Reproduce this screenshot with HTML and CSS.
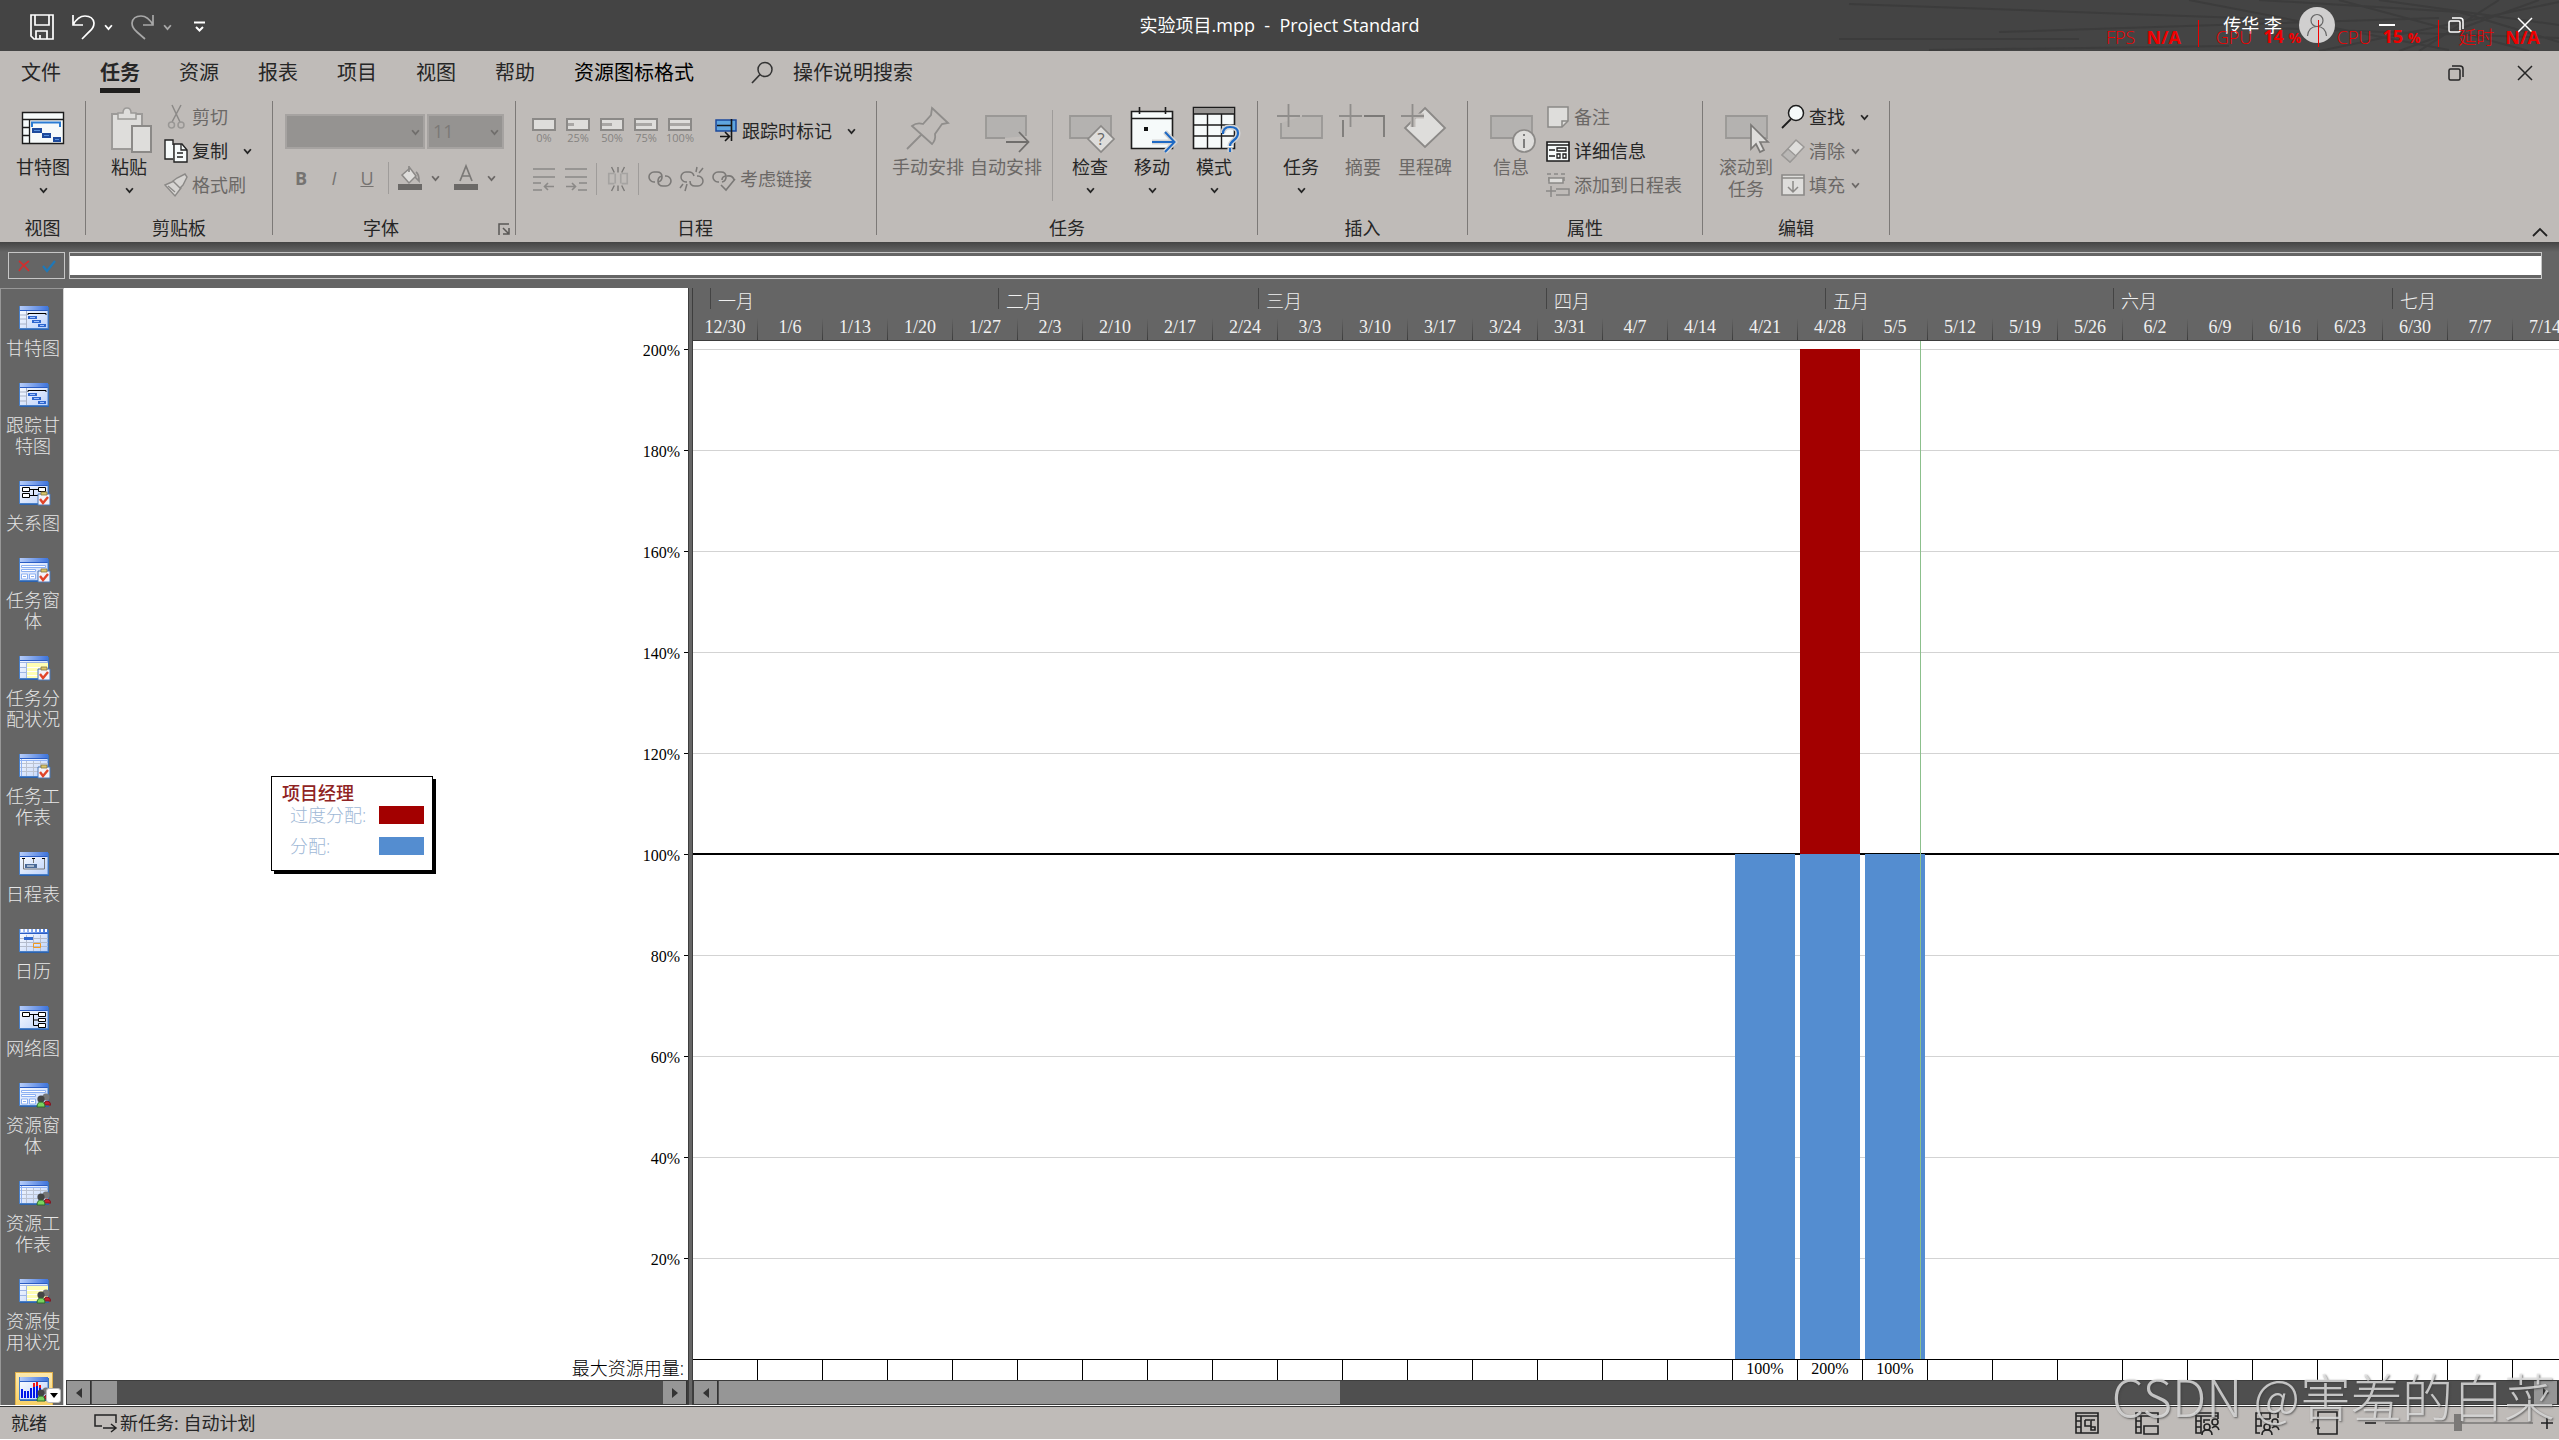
FILE: index.html
```html
<!DOCTYPE html>
<html lang="zh-CN">
<head>
  <meta charset="UTF-8">
  <meta name="viewport" content="width=device-width, initial-scale=1.0">
  <title>实验项目.mpp - Project Standard</title>
  <link rel="stylesheet" href="styles.css">
</head>
<body>

  <!-- Shared icon parts -->
  <svg class="sprite" aria-hidden="true">
    <defs>
      <linearGradient id="bar" x1="0" y1="0" x2="1" y2="0"><stop offset="0" stop-color="#b9cffa"/><stop offset="1" stop-color="#3f74dc"/></linearGradient>
      <linearGradient id="paper" x1="0" y1="0" x2="1" y2="1"><stop offset="0" stop-color="#fff"/><stop offset="1" stop-color="#bdd2fb"/></linearGradient>
    </defs>
    <symbol id="chev" viewBox="0 0 8 6"><path d="M1 1l3 3.500L7 1" fill="none" stroke="currentColor" stroke-width="1.600"/></symbol>
    <symbol id="win" viewBox="0 0 32 25">
      <path d="M1 1h29v23H1z" fill="#2c62ad"/><path d="M0 0h29v22H0z" fill="url(#paper)"/><path d="M0 0h29v4H0z" fill="url(#bar)"/><path d="M0 4.500h29" stroke="#2a5cc4"/><path d="M.5 0v22M0 22.500h29M29 1v22" stroke="#4a80c8" fill="none"/>
    </symbol>
    <symbol id="check" viewBox="0 0 32 25">
      <path d="M19 13h12v11H19z" fill="#f3f3fa" stroke="#4a78b8"/><path d="M22 11h6v3h-6z" fill="#d9c66a" stroke="#85743a" stroke-width=".8"/><path d="M21 18l3 4 5-6" fill="none" stroke="#e1452a" stroke-width="2.400"/>
    </symbol>
    <symbol id="people" viewBox="0 0 32 25">
      <circle cx="27" cy="14" r="3.600" fill="#777"/><circle cx="22" cy="16" r="3.600" fill="#454545"/><path d="M25 22q0-4 3-4t4 4z" fill="#c4202f" stroke="#7b1520"/><path d="M18 24q0-5 4-5t4 5z" fill="#7ad35f" stroke="#2c6a2a"/>
    </symbol>
    <symbol id="gantt" viewBox="0 0 32 25">
      <use href="#win"/><path d="M1 9h6M1 13h6M1 18h6M7.500 5v17" stroke="#a9b2c6"/><path d="M9 9V7.500h18V9" fill="none" stroke="#000"/><path d="M9 10h9v3H9zM13 14h9v3h-9zM19 18h8v3h-8z" fill="#2f67cf"/><path d="M11 11.500h5M15 15.500h5M21 19.500h4" stroke="#9fc1ff"/>
    </symbol>
    <symbol id="form" viewBox="0 0 32 25">
      <use href="#win"/><path d="M2.500 7.500h24v2h-24zM2.500 11.500h14v2h-14zM2.500 16h6v5h-6zM10.500 16h6v5h-6z" fill="#fff" stroke="#8cb0f2"/><path d="M4 18.500h3M12 18.500h3" stroke="#8cb0f2"/>
    </symbol>
    <symbol id="sheet" viewBox="0 0 32 25">
      <use href="#win"/><path d="M1 9.500h28M1 13.500h28M1 17.500h28M7.500 6v16M14.500 6v16M21.500 6v16" stroke="#bcc3d2"/><path d="M2.500 5v17M1 6.500h28" stroke="#8fb2f5"/>
    </symbol>
    <symbol id="usage" viewBox="0 0 32 25">
      <use href="#win"/><path d="M8 7h21v15H8z" fill="#ffffb4"/><path d="M1 6.500h28M1 11.500h6M1 16.500h6M7.500 6v16" stroke="#9fb6e4"/><path d="M8 11.500h21M8 15.500h21M8 19.500h21" stroke="#fff"/>
    </symbol>
    <symbol id="plus" viewBox="0 0 24 24"><path d="M0 12h23M11.500 0v23" stroke="#8f8d8b" stroke-width="1.800"/></symbol>
    <symbol id="restore" viewBox="0 0 16 16"><rect x="1" y="4" width="11" height="11" rx="1.500" fill="none" stroke="currentColor" stroke-width="1.500"/><path d="M4 1h8q3 0 3 3v8" fill="none" stroke="currentColor" stroke-width="1.500"/></symbol>
    <symbol id="close" viewBox="0 0 16 16"><path d="M1 1l14 14M15 1L1 15" stroke="currentColor" stroke-width="1.500"/></symbol>
  </svg>

  <header class="titlebar">
    <svg class="titlebar-art" viewBox="0 0 720 51" preserveAspectRatio="none"><path d="M10 4l420 15M0 39h240M90 50l300-4M160 32l440-14M350 0l260 50M420 0l200 12 100 30M480 51L720 2M500 0l190 51M560 51L700 0M430 28l290 10M540 0l180 25M580 51l80-51" fill="none" stroke="#3c3c3c" stroke-width="2"/></svg>
    <div class="quick">
      <button aria-label="保存"><svg width="24" height="26" viewBox="0 0 24 26"><path d="M1 1h22v24H4l-3-3zM5 1v10h14V1M6 25v-8h11v8M10 25v-4" fill="none" stroke="#fff" stroke-width="1.700"/></svg></button>
      <button class="undo" aria-label="撤消"><svg width="24" height="26" viewBox="0 0 24 26"><path d="M1 1v10h10M1 11Q6 2 13 2q8 0 9 7 0 5-5 9l-7 7" fill="none" stroke="#fff" stroke-width="1.700"/></svg><svg class="chev"><use href="#chev"/></svg></button>
      <button class="redo" aria-label="恢复"><svg width="24" height="26" viewBox="0 0 24 26"><path d="M22 1v10H12M22 11Q17 2 10 2 2 2 1 9q0 5 5 9l8 7" fill="none" stroke="#a8a8a8" stroke-width="1.700"/></svg><svg class="chev"><use href="#chev"/></svg></button>
      <button class="more" aria-label="自定义"><svg width="12" height="12" viewBox="0 0 12 12"><path d="M0 1.500h11M2 6l3.500 3.500L9 6" fill="none" stroke="#fff" stroke-width="2"/></svg></button>
    </div>
    <h1 class="doc-title">实验项目.mpp&nbsp; -&nbsp; Project Standard</h1>
    <div class="window-tools">
      <span class="user">传华 李</span>
      <svg class="avatar" viewBox="0 0 36 36"><circle cx="18" cy="18" r="18" fill="#d0cfcf"/><circle cx="18" cy="13.500" r="6" fill="none" stroke="#666" stroke-width="1.200"/><path d="M8.500 29q1-9.500 9.500-9.500t9.500 9.500" fill="none" stroke="#666" stroke-width="1.200"/></svg>
      <button aria-label="最小化"><svg width="16" height="16" viewBox="0 0 16 16"><path d="M0 8h16" stroke="#fff" stroke-width="2"/></svg></button>
      <button aria-label="还原"><svg width="16" height="16"><use href="#restore"/></svg></button>
      <button aria-label="关闭"><svg width="16" height="16"><use href="#close"/></svg></button>
    </div>
    <div class="perf">
      <span>FPS <b>N/A</b></span>
      <span>GPU <b>14 <small>%</small></b></span>
      <span>CPU <b>15 <small>%</small></b></span>
      <span>延时 <b>N/A</b></span>
    </div>
  </header>

  <section class="ribbon">
    <nav class="tabs">
      <a href="#">文件</a>
      <a href="#" class="active">任务</a>
      <a href="#">资源</a>
      <a href="#">报表</a>
      <a href="#">项目</a>
      <a href="#">视图</a>
      <a href="#">帮助</a>
      <a href="#" class="context">资源图标格式</a>
      <button class="tell-me"><svg width="22" height="24" viewBox="0 0 22 24"><circle cx="14" cy="8.500" r="7" fill="none" stroke="#333" stroke-width="1.500"/><path d="M9 13.500L1 22" stroke="#333" stroke-width="1.700"/></svg>操作说明搜索</button>
      <div class="doc-window">
        <button aria-label="还原窗口"><svg width="16" height="16"><use href="#restore"/></svg></button>
        <button aria-label="关闭窗口"><svg width="16" height="16"><use href="#close"/></svg></button>
      </div>
    </nav>

    <div class="groups">
      <div class="group g-view">
        <div class="tools">
          <button class="big">
            <svg class="pic" viewBox="0 0 46 46"><path d="M2.500 5.500h41v31h-41z" fill="#f6fafa" stroke="#1c1c1c" stroke-width="1.400"/><path d="M2 12.500h42M9.500 12v24M2 20.500h7M2 28.500h7" stroke="#1c1c1c" stroke-width="1.300"/><path d="M12 20v-4.500h28V20" fill="none" stroke="#2b7cd3" stroke-width="2"/><path d="M12 21h10v5H12zM22 26h9v5h-9zM33 30h8v5h-8z" fill="#1d4a9c"/><path d="M14 23.500h6M24 28.500h5M35 32.500h4" stroke="#5a93dd"/></svg>
            甘特图<svg class="chev"><use href="#chev"/></svg>
          </button>
        </div>
        <h2>视图</h2>
      </div>

      <div class="group g-clip">
        <div class="tools">
          <button class="big">
            <svg class="pic" viewBox="0 0 46 46"><path d="M6 7h30v35H6z" fill="#dedddb" stroke="#9c9a98" stroke-width="2"/><path d="M12 12V6h5q0-5 4-5t4 5h5v6z" fill="#dedddb" stroke="#9c9a98" stroke-width="1.500"/><path d="M26 19h19v26H26z" fill="#dedddb" stroke="#8b8987" stroke-width="2"/></svg>
            粘贴<svg class="chev"><use href="#chev"/></svg>
          </button>
          <div class="stack">
            <button disabled><svg class="ico" viewBox="0 0 24 24"><path d="M8 0l8 17M17 0L8 17" stroke="#8b8987" stroke-width="1.500"/><circle cx="7.500" cy="20" r="3" fill="none" stroke="#999795" stroke-width="1.500"/><circle cx="17" cy="20" r="3" fill="none" stroke="#999795" stroke-width="1.500"/></svg>剪切</button>
            <button><svg class="ico" viewBox="0 0 24 24"><path d="M9 20H1V1h8v5" fill="#f6fafa" stroke="#222" stroke-width="1.400"/><path d="M10 5h8l5 6v12H10z" fill="#f6fafa" stroke="#222" stroke-width="1.400"/><path d="M17 5v6h6M13 14h6M13 18h6" fill="none" stroke="#222" stroke-width="1.300"/></svg>复制 <svg class="chev"><use href="#chev"/></svg></button>
            <button disabled><svg class="ico" viewBox="0 0 24 24"><path d="M1 12l9-4 7 7-6 8z" fill="#d6d4d2" stroke="#8b8987" stroke-width="1.400"/><path d="M9 8l4-3 8-4 2 3-4 8-3 3zM4 13l7 6" fill="#d6d4d2" stroke="#8b8987" stroke-width="1.400"/></svg>格式刷</button>
          </div>
        </div>
        <h2>剪贴板</h2>
      </div>

      <div class="group g-font">
        <div class="tools rows">
          <div class="row selects">
            <label class="pick pick-font"><select aria-label="字体" disabled><option></option></select><svg class="chev"><use href="#chev"/></svg></label>
            <label class="pick pick-size"><select aria-label="字号" disabled><option>11</option></select><svg class="chev"><use href="#chev"/></svg></label>
          </div>
          <div class="row">
            <button class="tool" disabled><b>B</b></button>
            <button class="tool" disabled><i>I</i></button>
            <button class="tool" disabled><u>U</u></button>
            <span class="rule"></span>
            <button class="tool" disabled aria-label="填充颜色"><svg class="ico" viewBox="0 0 24 24"><path d="M4 9l8-7 6 8-7 7z" fill="#dedddb" stroke="#8b8987" stroke-width="1.500"/><path d="M11 0v6M18 6q3 2 3 9l-4-4" fill="none" stroke="#8b8987" stroke-width="1.700"/><path d="M0 18h24v6H0z" fill="#6b6967"/></svg></button>
            <svg class="chev dim"><use href="#chev"/></svg>
            <button class="tool" disabled aria-label="字体颜色"><svg class="ico" viewBox="0 0 24 24"><path d="M6 15L12 0l6 15M8 10h8" fill="none" stroke="#7b7977" stroke-width="1.700"/><path d="M0 18h24v6H0z" fill="#6b6967"/></svg></button>
            <svg class="chev dim"><use href="#chev"/></svg>
          </div>
        </div>
        <h2>字体</h2>
        <button class="launcher" aria-label="字体设置"><svg width="12" height="12" viewBox="0 0 12 12"><path d="M1 12V1h10M5 5l6 6M11 5v6H5" fill="none" stroke="#5a5856" stroke-width="1.500"/></svg></button>
      </div>

      <div class="group g-plan">
        <div class="tools rows">
          <div class="row">
            <button class="pct" disabled><svg viewBox="0 0 24 13"><path d="M1 1h22v11H1z"/></svg>0%</button>
            <button class="pct" disabled><svg viewBox="0 0 24 13"><path d="M1 1h22v11H1z"/><path d="M2 6.500h6" class="fill"/></svg>25%</button>
            <button class="pct" disabled><svg viewBox="0 0 24 13"><path d="M1 1h22v11H1z"/><path d="M2 6.500h10" class="fill"/></svg>50%</button>
            <button class="pct" disabled><svg viewBox="0 0 24 13"><path d="M1 1h22v11H1z"/><path d="M2 6.500h16" class="fill"/></svg>75%</button>
            <button class="pct" disabled><svg viewBox="0 0 24 13"><path d="M1 1h22v11H1z"/><path d="M2 6.500h20" class="fill"/></svg>100%</button>
            <button class="line track"><svg class="ico" viewBox="0 0 24 24"><path d="M2 1h20v11H2z" fill="#5fa5de" stroke="#1d4a9c" stroke-width="1.500"/><path d="M3 6.500h14M17.500 0v22M6 17.500h9M11 13l4.500 4.500L11 22" fill="none" stroke="#151515" stroke-width="1.600"/></svg>跟踪时标记 <svg class="chev"><use href="#chev"/></svg></button>
          </div>
          <div class="row">
            <button class="tool" disabled aria-label="升级"><svg class="ico" viewBox="0 0 24 24"><path d="M1 2h22M1 10h22M1 16h8M1 23h9M13 19.500h9M16 16l-3.500 3.500L16 23" fill="none" stroke="#8b8987" stroke-width="1.600"/></svg></button>
            <button class="tool" disabled aria-label="降级"><svg class="ico" viewBox="0 0 24 24"><path d="M1 2h22M1 10h22M15 16h8M14 23h9M2 19.500h9M8 16l3.500 3.500L8 23" fill="none" stroke="#8b8987" stroke-width="1.600"/></svg></button>
            <span class="rule"></span>
            <button class="tool" disabled aria-label="拆分"><svg class="ico" viewBox="0 0 24 26"><path d="M8 7H2v11h6M16 7h6v11h-6M9 7v11M15 7v11" fill="none" stroke="#a5a3a1" stroke-width="1.800"/><path d="M12 0v6M5 0l3 6M19 0l-3 6M12 20v6M5 26l3-6M19 26l-3-6" stroke="#7b7977" stroke-width="1.500"/></svg></button>
            <span class="rule"></span>
            <button class="tool" disabled aria-label="链接"><svg class="ico" viewBox="0 0 24 24"><path d="M7 15H6a5 5 0 010-10h3q5 0 5 5 0 4-4 5M17 9h1a5 5 0 010 10h-3q-5 0-5-5 0-4 4-5" fill="none" stroke="#7b7977" stroke-width="1.600"/></svg></button>
            <button class="tool" disabled aria-label="取消链接"><svg class="ico" viewBox="0 0 24 24"><path d="M7 15H6a5 5 0 010-10h3q4 0 5 4M17 9h1a5 5 0 010 10h-3q-5 0-5-5M16 5l1-5M19 6l4-5M7 17l-2 7M3 17l-3 4" fill="none" stroke="#7b7977" stroke-width="1.500"/></svg></button>
            <button class="line" disabled><svg class="ico" viewBox="0 0 24 24"><path d="M7 15H6a5 5 0 010-10h3q5 0 5 5 0 4-4 5M10 13q0-4 5-4 6-1 7 4M9 18l5 5 9-11" fill="none" stroke="#7b7977" stroke-width="1.600"/></svg>考虑链接</button>
          </div>
        </div>
        <h2>日程</h2>
      </div>

      <div class="group g-task">
        <div class="tools">
          <button class="big wide" disabled><svg class="pic" viewBox="0 0 46 46"><path d="M27 1l16 15-6 1-7 10q1 6-3 10L7 19q5-4 11-2l8-9zM16 28L2 42" fill="none" stroke="#8f8d8b" stroke-width="1.800"/></svg>手动安排</button>
          <button class="big wide" disabled><svg class="pic" viewBox="0 0 46 46"><path d="M22 31H3V9h40v20" fill="#b4b2b0" stroke="#9a9896" stroke-width="1.800"/><path d="M23 35h22M36 25l9.500 10L36 45" fill="none" stroke="#706e6c" stroke-width="1.800"/></svg>自动安排</button>
          <span class="rule tall"></span>
          <button class="big"><svg class="pic" viewBox="0 0 46 46"><path d="M3 9h41v22H3z" fill="#b4b2b0" stroke="#9a9896" stroke-width="1.800"/><path d="M34 19l13 13-13 13-13-13z" fill="#dedddb" stroke="#8b8987" stroke-width="1.700"/><text x="34" y="38" class="mark" fill="#666">?</text></svg>检查<svg class="chev"><use href="#chev"/></svg></button>
          <button class="big"><svg class="pic" viewBox="0 0 46 46"><path d="M2.500 4.500h41v37h-41z" fill="#f6fafa" stroke="#1c1c1c" stroke-width="1.600"/><path d="M2 11.500h42M10.500 0v7M36.500 0v7" stroke="#1c1c1c" stroke-width="1.600"/><path d="M15 20h4v4h-4z" fill="#111"/><path d="M23 35h22M36 25l9.500 10L36 45" fill="none" stroke="#d5d5d5" stroke-width="5"/><path d="M23 35h22M36 25l9.500 10L36 45" fill="none" stroke="#1f6ac4" stroke-width="2"/></svg>移动<svg class="chev"><use href="#chev"/></svg></button>
          <button class="big"><svg class="pic" viewBox="0 0 46 46"><path d="M2.500.5h41v41h-41z" fill="#f6fafa" stroke="#1c1c1c" stroke-width="1.600"/><path d="M3 1h40v6H3z" fill="#979593"/><path d="M2 7h42M2 18h42M2 29h42M16.500 7v34M30.500 7v34" stroke="#1c1c1c" stroke-width="1.400"/><path d="M32 26q0-6 7-6 8 0 8 6 0 4-4 7-4 3-4 6M39 41v4" fill="none" stroke="#d5d5d5" stroke-width="5"/><path d="M32 27q0-7 7-7 8 0 8 6 0 4-4 7-4 3-4 6M39 41v4" fill="none" stroke="#1f6ac4" stroke-width="2.200"/></svg>模式<svg class="chev"><use href="#chev"/></svg></button>
        </div>
        <h2>任务</h2>
      </div>

      <div class="group g-insert">
        <div class="tools">
          <button class="big"><svg class="pic" viewBox="0 0 46 46"><path d="M24 9h20v22H3V16" fill="#b9b6b3" stroke="#9a9896" stroke-width="1.800"/><use href="#plus" x="-1" y="-3" width="24" height="24"/></svg>任务<svg class="chev"><use href="#chev"/></svg></button>
          <button class="big" disabled><svg class="pic" viewBox="0 0 46 46"><path d="M24 9h20v21M3 13v17" fill="none" stroke="#7b7977" stroke-width="1.800"/><use href="#plus" x="-1" y="-3" width="24" height="24"/></svg>摘要</button>
          <button class="big" disabled><svg class="pic" viewBox="0 0 46 46"><path d="M23 1l20 20-20 19L3 21z" fill="#dedddb" stroke="#8b8987" stroke-width="1.800"/><path d="M0 9h22M11 -2v22" stroke="#bfbbb8" stroke-width="5"/><use href="#plus" x="-1" y="-3" width="24" height="24"/></svg>里程碑</button>
        </div>
        <h2>插入</h2>
      </div>

      <div class="group g-props">
        <div class="tools">
          <button class="big" disabled><svg class="pic" viewBox="0 0 46 46"><path d="M3 9h41v22H3z" fill="#b4b2b0" stroke="#9a9896" stroke-width="1.800"/><circle cx="36" cy="34" r="11" fill="#dedddb" stroke="#8b8987" stroke-width="1.700"/><path d="M36 32v9M36 27v2" stroke="#666" stroke-width="1.600"/></svg>信息</button>
          <div class="stack">
            <button disabled><svg class="ico" viewBox="0 0 24 24"><path d="M2 2h20v14l-6 6H2z" fill="#dedddb" stroke="#8b8987" stroke-width="1.500"/><path d="M22 16h-6v6" fill="none" stroke="#8b8987" stroke-width="1.500"/></svg>备注</button>
            <button><svg class="ico" viewBox="0 0 24 24"><path d="M1 3h22v19H1z" fill="#f6fafa" stroke="#1c1c1c" stroke-width="1.600"/><path d="M1 6h22M3 11h6M3 17h6M11 9h9v3h-9zM11 15h3v4h-3zM17 15h3v4h-3z" fill="none" stroke="#1c1c1c" stroke-width="1.300"/></svg>详细信息</button>
            <button disabled><svg class="ico" viewBox="0 0 24 24"><path d="M1 1h4M8 1h4M15 1h4M0 18h10M5 13v11M10 16h13v6H10M3 4v4M18 4v4" fill="none" stroke="#8b8987" stroke-width="1.500"/><path d="M3 5h14v5H3z" fill="#dedddb" stroke="#8b8987" stroke-width="1.500"/></svg>添加到日程表</button>
          </div>
        </div>
        <h2>属性</h2>
      </div>

      <div class="group g-edit">
        <div class="tools">
          <button class="big" disabled><svg class="pic" viewBox="0 0 46 46"><path d="M3 9h41v22H3z" fill="#b4b2b0" stroke="#9a9896" stroke-width="1.800"/><path d="M28 18v24l5-5 4 8 4-2-4-8h8z" fill="#dedddb" stroke="#7b7977" stroke-width="1.700"/></svg>滚动到<br>任务</button>
          <div class="stack">
            <button><svg class="ico" viewBox="0 0 24 24"><circle cx="15" cy="8" r="7.500" fill="#f6fafa" stroke="#1c1c1c" stroke-width="1.500"/><path d="M10 14l-9 9" stroke="#1c1c1c" stroke-width="1.800"/></svg>查找 <svg class="chev"><use href="#chev"/></svg></button>
            <button disabled><svg class="ico" viewBox="0 0 24 24"><path d="M1 16L15 1l8 7L9 23z" fill="#dedddb" stroke="#9a9896" stroke-width="1.500"/><path d="M1 16l6-6 8 7-6 6z" fill="#b9b7b5" stroke="#9a9896" stroke-width="1.300"/></svg>清除<svg class="chev"><use href="#chev"/></svg></button>
            <button disabled><svg class="ico" viewBox="0 0 24 24"><path d="M1 2h22v20H1z" fill="#dedddb" stroke="#8b8987" stroke-width="1.600"/><path d="M1 5h22M12 8v11M7 14l5 5 5-5" fill="none" stroke="#8b8987" stroke-width="1.500"/></svg>填充<svg class="chev"><use href="#chev"/></svg></button>
          </div>
        </div>
        <h2>编辑</h2>
      </div>

      <button class="collapse" aria-label="折叠功能区"><svg width="16" height="10" viewBox="0 0 16 10"><path d="M1 9l7-7 7 7" fill="none" stroke="#222" stroke-width="1.800"/></svg></button>
    </div>
  </section>

  <div class="entry">
    <div class="entry-actions">
      <button aria-label="取消"><svg width="12" height="12" viewBox="0 0 12 12"><path d="M1 1q5 4 10 10M11 1Q4 6 1 11" fill="none" stroke="#cf2f2f" stroke-width="1.700"/></svg></button>
      <button aria-label="输入"><svg width="14" height="12" viewBox="0 0 14 12"><path d="M1 6l4 5 8-10" fill="none" stroke="#1f78b8" stroke-width="2.200"/></svg></button>
    </div>
    <input type="text" class="entry-text" aria-label="条目">
  </div>

  <main class="workspace">
    <nav class="views">
      <a href="#"><svg><use href="#gantt"/></svg>甘特图</a>
      <a href="#"><svg><use href="#gantt"/></svg>跟踪甘特图</a>
      <a href="#"><svg viewBox="0 0 32 25"><use href="#win"/><path d="M3.500 6.500h7v4h-7zM3.500 12.500h7v4h-7zM19.500 6.500h7v4h-7zM11 8.500h8M11 14.500h9M14.500 9v6" fill="#fff" stroke="#000"/><use href="#check"/></svg>关系图</a>
      <a href="#"><svg viewBox="0 0 32 25"><use href="#form"/><use href="#check"/></svg>任务窗体</a>
      <a href="#"><svg viewBox="0 0 32 25"><use href="#usage"/><use href="#check"/></svg>任务分配状况</a>
      <a href="#"><svg viewBox="0 0 32 25"><use href="#sheet"/><use href="#check"/></svg>任务工作表</a>
      <a href="#"><svg viewBox="0 0 32 25"><use href="#win"/><path d="M4.500 7v10h21V7M14.500 7v4" fill="none" stroke="#777"/><path d="M3 6.500h3M13 6.500h3M23 6.500h3" stroke="#000"/><path d="M6 12h12v4H6z" fill="#4b6a98"/><path d="M8 14h7" stroke="#fff"/></svg>日程表</a>
      <a href="#"><svg viewBox="0 0 32 25"><use href="#win"/><path d="M1 9.500h28M1 13.500h28M1 17.500h28M7.500 6v16M14.500 6v16M21.500 6v16" stroke="#b4bccd"/><path d="M2 1.500h26" stroke="#fff" stroke-width="3" stroke-dasharray="2 2"/><path d="M5 8h9v3H5z" fill="#2f67cf"/><path d="M14.500 14.500h7v4h-7z" fill="none" stroke="#f39a1f"/></svg>日历</a>
      <a href="#"><svg viewBox="0 0 32 25"><use href="#win"/><path d="M3.500 6.500h7v4h-7zM19.500 6.500h7v4h-7zM19.500 12.500h7v3h-7zM19.500 17.500h7v4h-7z" fill="#fff" stroke="#000"/><path d="M11 8.500h8M14.500 9v10.500H19M15 14h4" fill="none" stroke="#000"/></svg>网络图</a>
      <a href="#"><svg viewBox="0 0 32 25"><use href="#form"/><use href="#people"/></svg>资源窗体</a>
      <a href="#"><svg viewBox="0 0 32 25"><use href="#sheet"/><use href="#people"/></svg>资源工作表</a>
      <a href="#"><svg viewBox="0 0 32 25"><use href="#usage"/><use href="#people"/></svg>资源使用状况</a>
      <a href="#" class="current" aria-label="资源图表"><svg viewBox="0 0 32 25"><use href="#win"/><path d="M3 12v9M6 14v7M9 14v7M12 11v10M15 9v12M18 9v12M21 11v10" stroke="#0018e8" stroke-width="2"/><path d="M15 6v4M18 5v4M21 8v3" stroke="#f01414" stroke-width="2"/><use href="#people"/></svg></a>
      <button class="views-more" aria-label="更多视图"><svg width="8" height="5" viewBox="0 0 8 5"><path d="M0 0h8L4 5z"/></svg></button>
    </nav>

    <section class="legend-pane">
      <div class="legend-body">
        <div class="legend-wrap">
          <dl class="legend">
            <dt>项目经理</dt>
            <dd>过度分配:<i class="over"></i></dd>
            <dd>分配:<i class="alloc"></i></dd>
          </dl>
        </div>
        <ol class="axis">
          <li>200%</li><li>180%</li><li>160%</li><li>140%</li><li>120%</li>
          <li>100%</li><li>80%</li><li>60%</li><li>40%</li><li>20%</li>
        </ol>
      </div>
      <p class="axis-total">最大资源用量:</p>
      <div class="scroll">
        <button aria-label="向左"><svg class="arrow" viewBox="0 0 6 10"><path d="M6 0v10L0 5z"/></svg></button>
        <span class="thumb thumb-small"></span>
        <button class="end" aria-label="向右"><svg class="arrow" viewBox="0 0 6 10"><path d="M0 0v10l6-5z"/></svg></button>
      </div>
    </section>

    <div class="splitter"></div>

    <section class="chart">
      <div class="timescale">
        <div class="months">
          <span style="width:18px"></span>
          <span style="width:288px">一月</span>
          <span style="width:260px">二月</span>
          <span style="width:288px">三月</span>
          <span style="width:279px">四月</span>
          <span style="width:288px">五月</span>
          <span style="width:279px">六月</span>
          <span style="width:288px">七月</span>
        </div>
        <div class="weeks">
          <span>12/30</span><span>1/6</span><span>1/13</span><span>1/20</span><span>1/27</span>
          <span>2/3</span><span>2/10</span><span>2/17</span><span>2/24</span><span>3/3</span>
          <span>3/10</span><span>3/17</span><span>3/24</span><span>3/31</span><span>4/7</span>
          <span>4/14</span><span>4/21</span><span>4/28</span><span>5/5</span><span>5/12</span>
          <span>5/19</span><span>5/26</span><span>6/2</span><span>6/9</span><span>6/16</span>
          <span>6/23</span><span>6/30</span><span>7/7</span><span>7/14</span>
        </div>
      </div>
      <div class="plot">
        <div class="grid-line"></div><div class="grid-line"></div><div class="grid-line"></div><div class="grid-line"></div><div class="grid-line"></div>
        <div class="grid-line limit"></div><div class="grid-line"></div><div class="grid-line"></div><div class="grid-line"></div><div class="grid-line"></div>
        <div class="bars">
          <div class="bar"><i class="alloc" style="height:50%"></i></div>
          <div class="bar"><i class="over" style="height:50%"></i><i class="alloc" style="height:50%"></i></div>
          <div class="bar"><i class="alloc" style="height:50%"></i></div>
        </div>
        <div class="today"></div>
      </div>
      <div class="totals">
        <span></span><span></span><span></span><span></span><span></span><span></span><span></span><span></span>
        <span></span><span></span><span></span><span></span><span></span><span></span><span></span><span></span>
        <span>100%</span><span>200%</span><span>100%</span>
        <span></span><span></span><span></span><span></span><span></span><span></span><span></span><span></span><span></span><span></span>
      </div>
      <div class="scroll">
        <button aria-label="向左"><svg class="arrow" viewBox="0 0 6 10"><path d="M6 0v10L0 5z"/></svg></button>
        <span class="thumb thumb-large"></span>
        <button class="end" aria-label="向右"><svg class="arrow" viewBox="0 0 6 10"><path d="M0 0v10l6-5z"/></svg></button>
      </div>
    </section>
  </main>

  <footer class="status">
    <span class="ready">就绪</span>
    <button class="new-task"><svg width="24" height="18" viewBox="0 0 24 18"><path d="M8 12H1V1h21v8M9 14h13M17 10l5 4-5 4" fill="none" stroke="#222" stroke-width="1.500"/></svg>新任务: 自动计划</button>
    <div class="status-views">
      <button aria-label="甘特图"><svg viewBox="0 0 24 24"><path d="M1 2h22v20H1zM1 5h22M6 5v17M1 10h5M1 16h5M10 9v6h6V9h4M10 9h5M16 16h4v3h-4z"/></svg></button>
      <button aria-label="任务分配状况"><svg viewBox="0 0 24 24"><path d="M23 12V2H1v20h5V5M1 5h22M1 10h5M1 16h5M9 15h14v8H9z"/></svg></button>
      <button aria-label="工作组规划器"><svg viewBox="0 0 24 24"><path d="M23 8V2H1v20h5V5M1 5h22M1 10h5M1 16h5M9 12V9h6"/><circle cx="12" cy="16" r="3"/><circle cx="20" cy="11" r="3"/><path d="M7 24q0-5 5-5t5 5M17 17q5-4 7 2"/></svg></button>
      <button aria-label="资源工作表"><svg viewBox="0 0 24 24"><path d="M5 22H1V2h22v5M1 8h14M1 15h6M6 2v13M15 2v6"/><circle cx="12" cy="16" r="3"/><circle cx="20" cy="11" r="3"/><path d="M7 24q0-5 5-5t5 5M17 17q5-4 7 2"/></svg></button>
      <button aria-label="报表"><svg viewBox="0 0 24 24"><path d="M3 1h19v22H3zM1 7h4M1 17h4"/></svg></button>
    </div>
    <div class="zoom">
      <button aria-label="缩小"><svg viewBox="0 0 12 12"><path d="M0 6h11"/></svg></button>
      <input type="range" min="0" max="100" value="49" aria-label="显示比例">
      <button aria-label="放大"><svg viewBox="0 0 12 12"><path d="M0 6h12M6 0v12"/></svg></button>
    </div>
  </footer>

  <div class="watermark">CSDN @害羞的白菜</div>

</body>
</html>
```

FILE: styles.css
```css
* {
  box-sizing: border-box;
}

body {
  margin: 0;
  height: 100vh;
  display: flex;
  flex-direction: column;
  position: relative;
  overflow: hidden;
  background-color: #656565;
  color: #262626;
  font-family: "Open Sans", "Noto Sans CJK SC", sans-serif;
  font-size: 18px;
  line-height: 22px;
}

button {
  margin: 0;
  padding: 0;
  border: 0;
  background: none;
  color: inherit;
  font: inherit;
  white-space: nowrap;
}

a {
  color: inherit;
  text-decoration: none;
}

button:disabled {
  color: #6b6866;
}

h1, h2, p, ol, dl, dd {
  margin: 0;
  padding: 0;
  font-size: 18px;
  font-weight: normal;
  list-style: none;
}

svg {
  display: block;
  flex: none;
  overflow: visible;
}

.sprite {
  position: absolute;
  width: 0;
  height: 0;
}

.chev {
  width: 9px;
  height: 7px;
}

/* Title bar */
.titlebar {
  position: relative;
  flex: none;
  display: grid;
  grid-template-columns: 1fr auto 1fr;
  align-items: center;
  height: 51px;
  padding-bottom: 2px;
  background-color: #444;
  color: #fff;
}

.titlebar-art {
  position: absolute;
  top: 0;
  right: 0;
  width: 720px;
  height: 51px;
  overflow: hidden;
}

.quick {
  display: flex;
  align-items: center;
  gap: 18px;
  padding: 5px 0 0 30px;
}

.quick button {
  display: flex;
  align-items: center;
  gap: 8px;
}

.quick .redo {
  color: #a8a8a8;
}

.quick .more {
  margin-left: 4px;
}

.window-tools {
  position: relative;
  display: flex;
  justify-content: flex-end;
  align-items: center;
}

.window-tools .avatar {
  width: 36px;
  height: 36px;
  margin: 0 17px 0 17px;
}

.window-tools button,
.doc-window button {
  display: grid;
  place-items: center;
  width: 69px;
  height: 40px;
}

.perf {
  position: absolute;
  top: 20px;
  right: 0;
  display: grid;
  grid-template-columns: repeat(4, 120px);
  color: #f00000;
  font-family: "Open Sans", "Noto Sans CJK SC", sans-serif;
  font-weight: 300;
}

.perf span {
  display: flex;
  justify-content: center;
  align-items: center;
  gap: 11px;
  height: 27px;
  padding-top: 6px;
  border-right: 1px solid #f00000;
}

.perf span:last-child {
  border: 0;
}

.perf span:first-child {
  padding-left: 10px;
}

.perf b {
  font-weight: 700;
}

.perf small {
  font-size: 14px;
}

/* Ribbon */
.ribbon {
  flex: none;
  height: 191px;
  background-color: #bfbbb8;
}

.tabs {
  display: flex;
  gap: 39px;
  height: 50px;
  padding-left: 21px;
  font-size: 20px;
  line-height: 44px;
}

.tabs a {
  height: 42px;
}

.tabs .active {
  font-weight: bold;
  border-bottom: 5px solid #1f1e1d;
}

.tabs .context {
  color: #000;
}

.tell-me {
  display: flex;
  align-items: center;
  gap: 20px;
  height: 44px;
  margin-left: 18px;
}

.doc-window {
  display: flex;
  align-items: center;
  height: 44px;
  margin-left: auto;
}

.groups {
  position: relative;
  display: flex;
}

.group {
  position: relative;
  display: flex;
  flex-direction: column;
  justify-content: space-between;
  height: 134px;
  padding-left: 12px;
  border-right: 1px solid #7c7977;
}

.g-view { width: 86px; }
.g-clip { width: 187px; }
.g-font { width: 243px; }
.g-plan { width: 361px; }
.g-task { width: 381px; }
.g-insert { width: 210px; }
.g-props { width: 235px; }
.g-edit { width: 187px; }

.group h2 {
  line-height: 14px;
  text-align: center;
  margin-left: -12px;
}

.g-font h2 {
  padding-right: 26px;
}

.tools {
  display: flex;
}

.big {
  display: flex;
  flex-direction: column;
  align-items: center;
  width: 62px;
  padding-top: 6px;
}

.big.wide {
  width: 78px;
}

.pic {
  width: 46px;
  height: 46px;
  margin-bottom: 3px;
}

.mark {
  font-size: 17px;
  text-anchor: middle;
}

.big .chev {
  margin-top: 9px;
}

.stack {
  display: flex;
  flex-direction: column;
  margin: -1px 0 0 4px;
}

.stack button,
.line {
  display: flex;
  align-items: center;
  gap: 4px;
  height: 34px;
}

.stack .chev,
.line .chev {
  margin-left: 11px;
}

.stack button:disabled .chev {
  margin-left: 2px;
}

.ico {
  width: 24px;
  height: 24px;
}

.rows {
  flex-direction: column;
  gap: 13px;
  padding-top: 13px;
}

.row {
  display: flex;
  align-items: center;
  gap: 9px;
  height: 34px;
}

.g-plan {
  padding-left: 16px;
}

.g-plan .row {
  gap: 8px;
}

.g-plan .rows {
  gap: 14px;
}

.g-plan .rule {
  margin-right: 1px;
}

.g-plan h2 {
  margin-left: -18px;
}

.g-font .row {
  padding-left: 4px;
}

.g-font .selects {
  gap: 2px;
  padding-left: 0;
}

.dim {
  color: #6b6866;
  margin-right: 5px;
}

.tool {
  display: grid;
  place-items: center;
  width: 24px;
  height: 34px;
}

.tool:disabled {
  color: #757371;
}

.rule {
  width: 1px;
  height: 32px;
  background-color: #9f9c9a;
}

.rule.tall {
  height: 91px;
  margin: 9px 6px 0 7px;
}

.pick {
  position: relative;
  height: 35px;
}

.pick select {
  width: 100%;
  height: 100%;
  padding: 0 4px;
  border: 2px solid #a6a3a1;
  border-radius: 0;
  background-color: #959391;
  color: #7b7977;
  font: inherit;
  opacity: 1;
  appearance: none;
}

.pick .chev {
  position: absolute;
  top: 15px;
  right: 5px;
  color: #706e6c;
}

.pick-font { width: 140px; }
.pick-size { width: 77px; }

.launcher {
  position: absolute;
  right: 5px;
  bottom: 0;
}

.pct {
  display: flex;
  flex-direction: column;
  align-items: center;
  width: 24px;
  margin-right: 2px;
  font-size: 11px;
  line-height: 14px;
}

.pct:disabled {
  color: #858381;
}

.pct svg {
  width: 24px;
  height: 13px;
  fill: #dedddb;
  stroke: #8b8987;
  stroke-width: 2;
}

.pct .fill {
  stroke: #a9a7a5;
  stroke-width: 3;
}

.track {
  margin-left: 12px;
}

.collapse {
  position: absolute;
  right: 11px;
  bottom: -2px;
}

/* Entry bar */
.entry {
  flex: none;
  display: flex;
  gap: 4px;
  height: 46px;
  padding: 10px 17px 9px 8px;
  background: linear-gradient(#444, #656565 10px);
}

.entry-actions {
  display: flex;
  align-items: center;
  justify-content: center;
  gap: 12px;
  width: 57px;
  border: 1px solid #c6c6c6;
}

.entry-text {
  flex: 1;
  min-width: 0;
  padding: 3px 0;
  border: 1px solid #c6c6c6;
  background: #fff content-box;
  font: inherit;
}

/* Workspace */
.workspace {
  flex: 1;
  min-height: 0;
  display: grid;
  grid-template-columns: 64px 624px 5px minmax(0, 1fr);
  border-bottom: 1px solid #fff;
}

.views {
  position: relative;
  min-height: 0;
  overflow: hidden;
  padding-top: 17px;
  border-left: 1px solid #979797;
  border-top: 1px solid #979797;
  border-right: 1px solid #d4d4d4;
  color: #e6e6e6;
  font-weight: 300;
  line-height: 21px;
  text-align: center;
}

.views a {
  display: block;
  width: 54px;
  margin: 0 auto 24px 5px;
}

.views a svg {
  width: 32px;
  height: 25px;
  margin: 0 auto 7px 13px;
}

.views .current {
  width: 38px;
  height: 36px;
  margin: -5px 0 0 14px;
  padding: 4px 0 0 3px;
  border: 1px solid #e0b04a;
  background: linear-gradient(#fde9ae, #f8cf62);
}

.views .current svg {
  margin: 0;
}

.views-more {
  position: absolute;
  right: 2px;
  bottom: 2px;
  display: grid;
  place-items: center;
  width: 15px;
  height: 15px;
  border: 1px solid #bbb;
  border-radius: 3px;
  background-color: #fff;
}

.legend-pane {
  display: flex;
  flex-direction: column;
  min-height: 0;
  background-color: #fff;
}

.legend-pane .scroll {
  margin-left: 2px;
}

.legend-body {
  flex: 1;
  display: flex;
}

.legend-wrap {
  flex: 1;
  display: grid;
  place-items: center;
}

.legend {
  width: 162px;
  height: 95px;
  padding: 6px 8px 0 10px;
  border: 1px solid #000;
  background-color: #fff;
  box-shadow: 3px 3px 0 #000;
}

.legend dt {
  color: #8f2323;
  font-weight: 500;
  line-height: 21px;
}

.legend dd {
  display: flex;
  justify-content: space-between;
  align-items: center;
  padding-left: 8px;
  color: #a0b8d6;
  font-weight: 300;
  line-height: 22px;
}

.legend dd + dd {
  margin-top: 9px;
}

.legend i {
  width: 45px;
  height: 18px;
}

.over {
  background-color: #a30000;
}

.alloc {
  background-color: #548dd0;
}

.axis {
  display: flex;
  flex-direction: column;
  width: 48px;
  padding-top: 61px;
  color: #000;
  font-family: "Liberation Serif", serif;
}

.axis li {
  flex: 1;
  display: flex;
  justify-content: flex-end;
  gap: 4px;
  margin-top: -8px;
  margin-bottom: 8px;
  font-size: 16px;
  line-height: 20px;
}

.axis li::after {
  content: "";
  width: 4px;
  height: 1px;
  margin-top: 8px;
  background-color: #000;
}

.axis-total {
  height: 21px;
  padding-right: 4px;
  color: #000;
  font-weight: 300;
  line-height: 18px;
  text-align: right;
}

.splitter {
  border: solid #3e3e3e;
  border-width: 0 1px;
}

.scroll {
  flex: none;
  display: flex;
  gap: 1px;
  height: 25px;
  border: 1px solid #3c3c3c;
  background-color: #4f4f4f;
}

.scroll button {
  display: grid;
  place-items: center;
  width: 24px;
  background-color: #969696;
  border-right: 1px solid #333;
}

.scroll .end {
  margin-left: auto;
}

.arrow {
  width: 6px;
  height: 10px;
  fill: #333;
}

.thumb {
  background-color: #969696;
}

.thumb-small { width: 25px; }
.thumb-large { width: 33.3%; }

.chart {
  display: flex;
  flex-direction: column;
  min-height: 0;
  background-color: #fff;
}

.timescale {
  height: 53px;
  overflow: hidden;
  border-bottom: 1px solid #3c3c3c;
  background-color: #656565;
  color: #f0f0f0;
}

.months,
.weeks,
.totals {
  display: flex;
  overflow: hidden;
}

.months {
  height: 26px;
  font-weight: 300;
  line-height: 26px;
}

.months span {
  flex: none;
  padding-left: 7px;
  background: linear-gradient(#444, #444) right top / 1px 21px no-repeat;
}

.weeks {
  height: 26px;
  font-family: "Liberation Serif", serif;
  line-height: 26px;
}

.weeks span {
  flex: none;
  width: 65px;
  padding-right: 1px;
  text-align: center;
  background: linear-gradient(#656565, #3c3c3c) right bottom / 1px 22px no-repeat;
}

.plot {
  position: relative;
  flex: 1;
  display: flex;
  flex-direction: column;
  padding-top: 8px;
}

.grid-line {
  flex: 1;
  border-top: 1px solid #d3d3d3;
}

.grid-line.limit {
  margin-top: -1px;
  border-top: 2px solid #000;
}

.bars {
  position: absolute;
  top: 8px;
  bottom: 0;
  left: 0;
  display: flex;
  gap: 5px;
  padding-left: 1042px;
}

.bar {
  display: flex;
  flex-direction: column;
  justify-content: flex-end;
  width: 60px;
}

.today {
  position: absolute;
  top: 0;
  bottom: 0;
  left: 1227px;
  width: 1px;
  background-color: #8cc08c;
}

.totals {
  flex: none;
  height: 21px;
  border-top: 1px solid #000;
  color: #000;
  font-family: "Liberation Serif", serif;
  font-size: 16px;
  line-height: 18px;
}

.totals span {
  flex: none;
  width: 65px;
  border-right: 1px solid #000;
  text-align: center;
}

/* Status bar */
.status {
  flex: none;
  display: flex;
  align-items: center;
  height: 34px;
  padding: 0 6px 1px 11px;
  border-top: 1px solid #333;
  border-bottom: 1px solid #fff;
  background-color: #bfbbb8;
}

.new-task {
  display: flex;
  align-items: center;
  gap: 2px;
  margin-left: 47px;
}

.status svg {
  fill: none;
  stroke: #222;
  stroke-width: 1.6;
}

.status-views {
  display: flex;
  gap: 36px;
  margin-left: auto;
}

.status-views svg {
  width: 24px;
  height: 24px;
}

.zoom {
  display: flex;
  align-items: center;
  gap: 8px;
  margin-left: 26px;
}

.zoom svg {
  width: 12px;
  height: 12px;
}

.zoom input {
  width: 148px;
  height: 18px;
  margin: 0;
  background: linear-gradient(#8b8987, #8b8987) center / 100% 2px no-repeat;
  appearance: none;
}

.zoom input::-webkit-slider-thumb {
  width: 8px;
  height: 17px;
  background-color: #7b7977;
  appearance: none;
}

.watermark {
  position: absolute;
  right: 4px;
  bottom: 11px;
  color: rgba(228, 228, 228, 0.8);
  font-family: "Noto Sans CJK SC", sans-serif;
  font-size: 51px;
  font-weight: 300;
  line-height: 68px;
  text-shadow: 1px 1px 2px rgba(60, 60, 60, 0.7);
  pointer-events: none;
}
```
